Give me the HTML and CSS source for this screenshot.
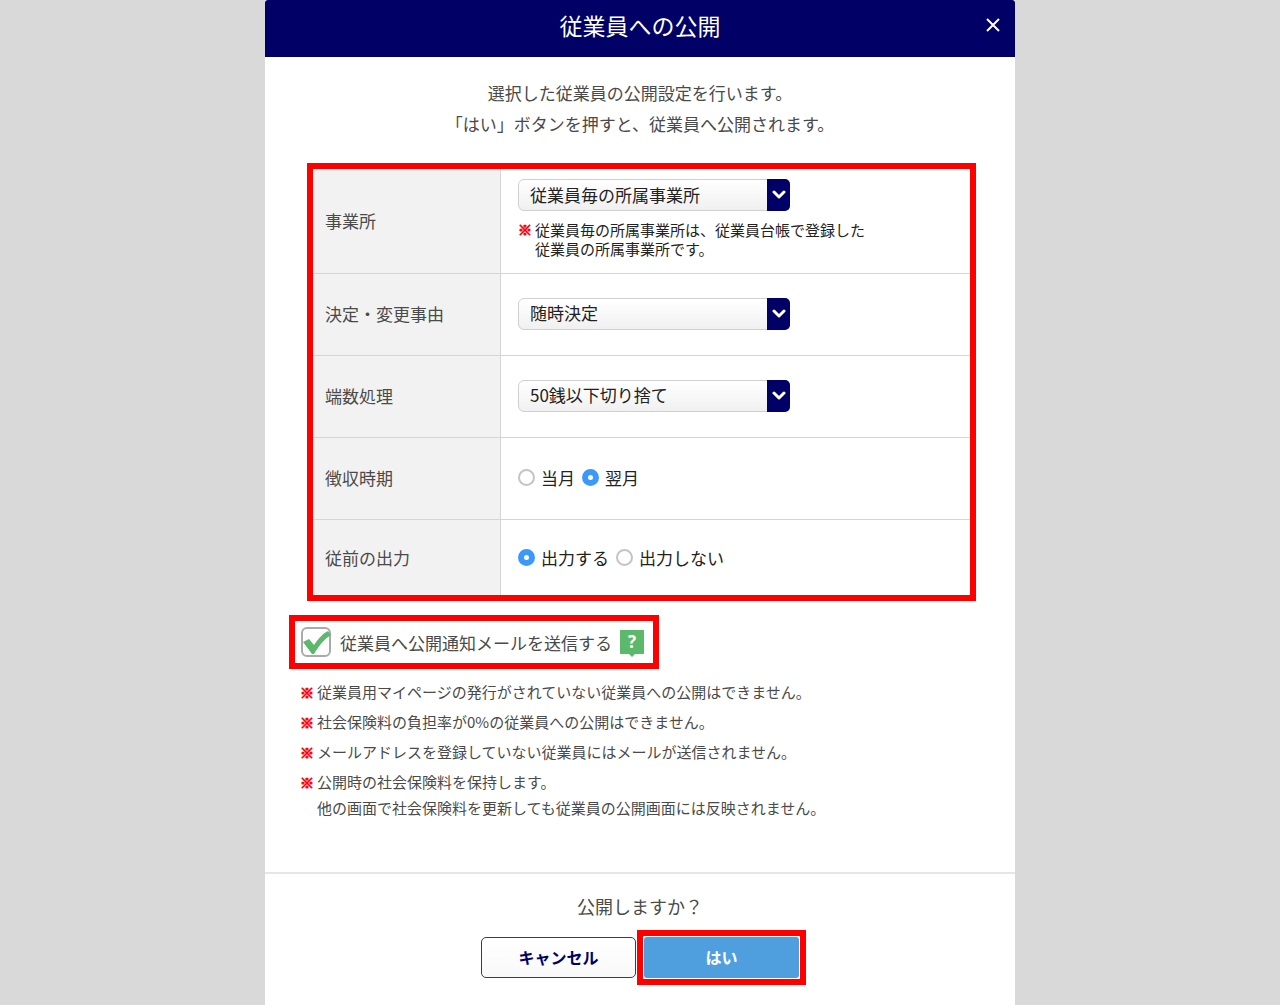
FILE: index.html
```html
<!DOCTYPE html>
<html lang="ja">
<head>
    <meta charset="UTF-8">
    <meta name="viewport" content="width=device-width, initial-scale=1.0">
    <title>従業員への公開</title>
    <link rel="stylesheet" href="styles.css">
</head>
<body>

    <form class="modal">
        <header class="modal-header">
            <h1>従業員への公開</h1>
            <button type="button" class="close" aria-label="閉じる">
                <svg width="14" height="14" viewBox="0 0 14 14"><path d="M1 1l12 12M13 1L1 13" fill="none" stroke="#fff" stroke-width="2"/></svg>
            </button>
        </header>

        <main class="modal-body">
            <p class="lead">選択した従業員の公開設定を行います。<br>「はい」ボタンを押すと、従業員へ公開されます。</p>

            <div class="settings">
                <table>
                    <tr class="row-office">
                        <th scope="row"><label for="office">事業所</label></th>
                        <td>
                            <div class="select">
                                <select id="office"><option>従業員毎の所属事業所</option></select>
                                <span class="arrow"><svg width="14" height="10" viewBox="0 0 14 10"><path d="M2 2l5 5 5-5" fill="none" stroke="#fff" stroke-width="3" stroke-linecap="round" stroke-linejoin="round"/></svg></span>
                            </div>
                            <p class="note hint"><span class="mark">※</span><span>従業員毎の所属事業所は、従業員台帳で登録した<br>従業員の所属事業所です。</span></p>
                        </td>
                    </tr>
                    <tr>
                        <th scope="row"><label for="reason">決定・変更事由</label></th>
                        <td>
                            <div class="select">
                                <select id="reason"><option>随時決定</option></select>
                                <span class="arrow"><svg width="14" height="10" viewBox="0 0 14 10"><path d="M2 2l5 5 5-5" fill="none" stroke="#fff" stroke-width="3" stroke-linecap="round" stroke-linejoin="round"/></svg></span>
                            </div>
                        </td>
                    </tr>
                    <tr>
                        <th scope="row"><label for="rounding">端数処理</label></th>
                        <td>
                            <div class="select">
                                <select id="rounding"><option>50銭以下切り捨て</option></select>
                                <span class="arrow"><svg width="14" height="10" viewBox="0 0 14 10"><path d="M2 2l5 5 5-5" fill="none" stroke="#fff" stroke-width="3" stroke-linecap="round" stroke-linejoin="round"/></svg></span>
                            </div>
                        </td>
                    </tr>
                    <tr>
                        <th scope="row">徴収時期</th>
                        <td>
                            <div class="radios">
                                <label><input type="radio" name="timing">当月</label>
                                <label><input type="radio" name="timing" checked>翌月</label>
                            </div>
                        </td>
                    </tr>
                    <tr class="row-last">
                        <th scope="row">従前の出力</th>
                        <td>
                            <div class="radios">
                                <label><input type="radio" name="output" checked>出力する</label>
                                <label><input type="radio" name="output">出力しない</label>
                            </div>
                        </td>
                    </tr>
                </table>
            </div>

            <div class="notify">
                <label>
                    <span class="check">
                        <input type="checkbox" checked>
                        <svg class="tick" width="30" height="30" viewBox="0 0 30 30"><path d="M2 15l6-3 5 6C17 12 21 7 27 4l3 4C23 12 18 19 13 27h-2z" fill="#5cb96b"/></svg>
                    </span>
                    従業員へ公開通知メールを送信する
                </label>
                <button type="button" class="help">?</button>
            </div>

            <ul class="notes">
                <li class="note"><span class="mark">※</span><span>従業員用マイページの発行がされていない従業員への公開はできません。</span></li>
                <li class="note"><span class="mark">※</span><span>社会保険料の負担率が0%の従業員への公開はできません。</span></li>
                <li class="note"><span class="mark">※</span><span>メールアドレスを登録していない従業員にはメールが送信されません。</span></li>
                <li class="note"><span class="mark">※</span><span>公開時の社会保険料を保持します。<br>他の画面で社会保険料を更新しても従業員の公開画面には反映されません。</span></li>
            </ul>
        </main>

        <footer class="modal-footer">
            <p>公開しますか？</p>
            <div class="buttons">
                <button type="button" class="btn cancel">キャンセル</button>
                <div class="ok-frame">
                    <button type="submit" class="btn ok">はい</button>
                </div>
            </div>
        </footer>
    </form>

</body>
</html>
```

FILE: styles.css
```css
* {
    box-sizing: border-box;
}
body {
    margin: 0;
    background: #d9d9d9;
    color: #4a4a4a;
    font-family: "Noto Sans CJK JP", sans-serif;
    font-size: 17px;
}
h1, p, ul {
    margin: 0;
    padding: 0;
}
button, select {
    font-family: inherit;
    cursor: pointer;
}
.modal {
    max-width: 750px;
    min-height: 100vh;
    margin: 0 auto;
    background: #fff;
}
.modal-header {
    display: grid;
    grid-template-columns: 44px 1fr 44px;
    align-items: center;
    padding: 5px 0 12px;
    background: #000066;
    border-radius: 3px 3px 0 0;
    color: #fff;
    text-align: center;
}
.modal-header h1 {
    grid-column: 2;
    font-size: 23px;
    font-weight: 400;
    line-height: 40px;
}
.close {
    display: flex;
    justify-content: center;
    padding: 8px;
    border: none;
    background: none;
}
.modal-body {
    padding: 20px 0 51px;
}
.lead {
    text-align: center;
    line-height: 31px;
}

/* settings table */
.settings {
    margin: 24px 39px 0 42px;
    border: 6px solid #f00;
}
table {
    width: 100%;
    border-spacing: 0;
}
th, td {
    height: 82px;
    padding: 0 0 2px;
    border-bottom: 1px solid #d5d5d5;
    text-align: left;
}
th {
    width: 188px;
    padding-left: 12px;
    border-right: 1px solid #d5d5d5;
    background: #f2f2f2;
    font-weight: 400;
}
td {
    padding-left: 17px;
    color: #222;
}
.row-office th, .row-office td {
    height: 105px;
}
.row-office td {
    padding-top: 10px;
    vertical-align: top;
}
.row-last th, .row-last td {
    height: 75px;
    padding-bottom: 0;
    border-bottom: none;
}
.select {
    position: relative;
    width: 272px;
    max-width: 100%;
}
.select select {
    display: block;
    width: 100%;
    height: 32px;
    padding: 0 30px 2px 11px;
    border: 1px solid #d0d0d0;
    border-radius: 6px;
    background: linear-gradient(#fff, #f0f0f0);
    color: #222;
    font-size: 17px;
    appearance: none;
}
.arrow {
    position: absolute;
    top: 0;
    right: 0;
    bottom: 0;
    width: 23px;
    display: flex;
    align-items: center;
    justify-content: center;
    border-radius: 0 5px 5px 0;
    background: #000066;
    pointer-events: none;
}
.note {
    display: flex;
    gap: 3px;
    font-size: 15px;
    line-height: 26px;
}
.mark {
    width: 14px;
    color: #f00;
    font-size: 14px;
    font-weight: 700;
    -webkit-text-stroke: 1px #f00;
}
.hint {
    margin-top: 9px;
    line-height: 19px;
}
.radios {
    display: flex;
    gap: 7px;
}
.radios label {
    display: flex;
    align-items: center;
    gap: 6px;
}
.radios input {
    appearance: none;
    width: 17px;
    height: 17px;
    margin: 0;
    border: 2px solid #c4c4c4;
    border-radius: 50%;
    background: #fff;
}
.radios input:checked {
    border: 6px solid #3b99fc;
}

/* mail notification */
.notify {
    display: flex;
    align-items: center;
    gap: 8px;
    width: fit-content;
    margin: 14px 0 0 24px;
    padding: 6px 9px 6px 6px;
    border: 6px solid #f00;
}
.notify label {
    display: flex;
    align-items: center;
    gap: 9px;
}
.check {
    position: relative;
    height: 30px;
}
.check input {
    display: block;
    appearance: none;
    width: 30px;
    height: 30px;
    margin: 0;
    border: 2px solid #aaa;
    border-radius: 6px;
    background: #fff;
}
.tick {
    position: absolute;
    top: 0;
    left: 0;
    display: none;
    pointer-events: none;
}
.check input:checked + .tick {
    display: block;
}
.help {
    position: relative;
    width: 24px;
    height: 24px;
    padding: 0;
    border: none;
    background: #5cb96b;
    color: #fff;
    font-family: "Open Sans", sans-serif;
    font-size: 17px;
    font-weight: 700;
    line-height: 24px;
}
.help::after {
    content: "";
    position: absolute;
    top: 100%;
    left: 9px;
    border: 3px solid transparent;
    border-top-color: #5cb96b;
}
.notes {
    margin: 10px 24px 0 35px;
    list-style: none;
}
.notes li + li {
    margin-top: 4px;
}

.modal-footer {
    padding: 19px 0 26px;
    border-top: 2px solid #e6e6e6;
    text-align: center;
}
.modal-footer p {
    font-size: 18px;
    line-height: 26px;
}
.buttons {
    display: flex;
    justify-content: center;
    gap: 8px;
    margin-top: 18px;
}
.btn {
    display: block;
    width: 155px;
    height: 41px;
    padding: 0 0 2px;
    border-radius: 5px;
    font-size: 16px;
    font-weight: 700;
}
.cancel {
    border: 1px solid #333388;
    background: linear-gradient(#fff, #f9f9f9);
    color: #000066;
}
.ok-frame {
    margin: -7px;
    padding: 1px;
    border: 6px solid #f00;
}
.ok {
    border: none;
    border-radius: 3px;
    background: #4f9fdf;
    color: #fff;
}
```
